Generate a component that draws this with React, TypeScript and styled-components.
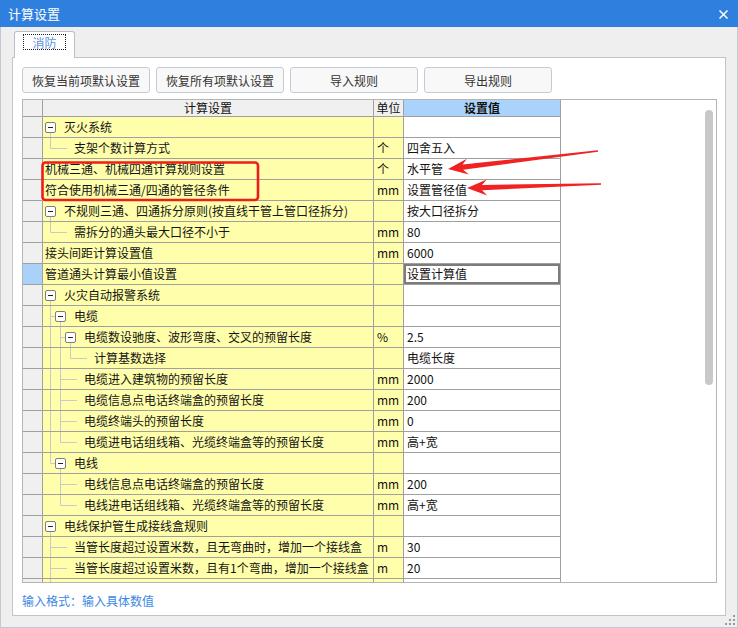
import React from 'react';
import styled, { createGlobalStyle } from 'styled-components';

/**
 * Page defaults.
 */
const GlobalStyle = createGlobalStyle`
  html, body {
    margin: 0;
    padding: 0;
    background: #efefef;
  }
  body {
    font-family: "Noto Sans CJK SC", "Noto Sans", sans-serif;
    font-size: 12px;
    color: #111;
  }
`;

/**
 * Dialog window.
 */
const Window = styled.div`
  position: relative;
  width: 738px;
  height: 628px;
  display: flex;
  flex-direction: column;
  background: #efefef;
  overflow: hidden;
`;

const TitleBar = styled.div`
  flex: none;
  height: 27px;
  background: #2e7fde;
  color: #fff;
  font-size: 13px;
  display: flex;
  align-items: center;
  justify-content: space-between;
  padding: 0 10px 0 8px;
`;

const CloseButton = styled.svg`
  width: 9px;
  height: 9px;
  margin-top: 1px;
`;

const Body = styled.div`
  flex: 1;
  display: flex;
  flex-direction: column;
  padding: 4px 11px 11px 11px;
  border: solid #c3c8d0;
  border-width: 0 1px 1px 1px;
  min-height: 0;
`;

const TabStrip = styled.div`
  flex: none;
  height: 26px;
  display: flex;
  align-items: flex-end;
  padding-left: 2px;
`;

const Tab = styled.div`
  width: 61px;
  height: 27px;
  box-sizing: border-box;
  margin-bottom: -1px;
  border: 1px solid #b9bec7;
  border-bottom: none;
  border-radius: 3px 3px 0 0;
  background: #fff;
  display: flex;
  justify-content: center;
  padding-top: 2px;
  z-index: 1;
`;

const TabLabel = styled.span`
  height: 16px;
  line-height: 15px;
  box-sizing: border-box;
  padding: 0 8px;
  border: 1px dotted #222;
  color: #5b92dc;
`;

/**
 * White page under the tab.
 */
const Panel = styled.div`
  flex: 1;
  display: flex;
  flex-direction: column;
  background: #fff;
  border: 1px solid #c4c4c4;
  padding: 9px 8px 0 9px;
`;

const ButtonRow = styled.div`
  display: flex;
  gap: 6px;
`;

const Button = styled.button`
  width: 128px;
  height: 26px;
  box-sizing: border-box;
  border: 1px solid #c5cad4;
  border-radius: 3px;
  background: #f8f8f8;
  font-family: inherit;
  font-size: 12px;
  color: #333;
  padding: 0;
`;

/**
 * Settings grid.
 */
const Grid = styled.div`
  margin-top: 6px;
  height: 484px;
  box-sizing: border-box;
  border: 1px solid #b4b4b4;
  display: flex;
  background: #fff;
`;

const TableArea = styled.div`
  flex: 1;
  overflow: hidden;
`;

const ScrollTrack = styled.div`
  flex: none;
  width: 14px;
  box-sizing: border-box;
  padding: 10px 3px 0 3px;
`;

const ScrollThumb = styled.div`
  width: 8px;
  height: 275px;
  border-radius: 4px;
  background: #c8c8c8;
`;

const Row = styled.div<{ $head?: boolean }>`
  display: grid;
  grid-template-columns: 20px 331px 30px 157px;
  height: ${(p) => (p.$head ? 17 : 21)}px;
`;

const Cell = styled.div`
  box-sizing: border-box;
  border-right: 1px solid #a0a0a0;
  border-bottom: 1px solid #a0a0a0;
  display: flex;
  align-items: center;
  overflow: hidden;
  white-space: nowrap;
  line-height: 16px;
`;

const RowHead = styled(Cell)<{ $active?: boolean }>`
  background: ${(p) => (p.$active ? '#aad1f8' : '#f0f0f0')};
`;

const HeadCell = styled(Cell)<{ $blue?: boolean }>`
  justify-content: center;
  background: ${(p) => (p.$blue ? '#aad2fa' : '#f0f0f0')};
  font-weight: ${(p) => (p.$blue ? 700 : 400)};
  color: #111;
`;

const TreeCell = styled(Cell)`
  background: #ffffab;
  padding-left: 2px;
`;

const UnitCell = styled(Cell)`
  background: #ffffab;
  padding-left: 3px;
`;

const ValueCell = styled(Cell)<{ $selected?: boolean }>`
  background: #fff;
  padding-left: 3px;
  box-shadow: ${(p) => (p.$selected ? 'inset 0 0 0 2px #7c7c7c' : 'none')};
`;

const Guides = styled.svg`
  flex: none;
  height: 20px;
`;

const Label = styled.span`
  color: #141414;
`;

const Hint = styled.div`
  margin-top: 10px;
  color: #3b88e2;
  line-height: 16px;
`;

const Overlay = styled.svg`
  position: absolute;
  left: 0;
  top: 0;
  pointer-events: none;
`;

const Grip = styled.svg`
  position: absolute;
  right: 2px;
  bottom: 2px;
`;

interface Item {
  label: string;
  unit?: string;
  value?: string;
  selected?: boolean;
  children?: Array<Item>;
}

interface FlatRow {
  item: Item;
  level: number;
  trail: Array<boolean>;
  last: boolean;
}

const tree: Array<Item> = [
  {
    label: '灭火系统',
    children: [{ label: '支架个数计算方式', unit: '个', value: '四舍五入' }],
  },
  { label: '机械三通、机械四通计算规则设置', unit: '个', value: '水平管' },
  { label: '符合使用机械三通/四通的管径条件', unit: 'mm', value: '设置管径值' },
  {
    label: '不规则三通、四通拆分原则(按直线干管上管口径拆分)',
    value: '按大口径拆分',
    children: [{ label: '需拆分的通头最大口径不小于', unit: 'mm', value: '80' }],
  },
  { label: '接头间距计算设置值', unit: 'mm', value: '6000' },
  { label: '管道通头计算最小值设置', value: '设置计算值', selected: true },
  {
    label: '火灾自动报警系统',
    children: [
      {
        label: '电缆',
        children: [
          {
            label: '电缆数设驰度、波形弯度、交叉的预留长度',
            unit: '%',
            value: '2.5',
            children: [{ label: '计算基数选择', value: '电缆长度' }],
          },
          { label: '电缆进入建筑物的预留长度', unit: 'mm', value: '2000' },
          { label: '电缆信息点电话终端盒的预留长度', unit: 'mm', value: '200' },
          { label: '电缆终端头的预留长度', unit: 'mm', value: '0' },
          { label: '电缆进电话组线箱、光缆终端盒等的预留长度', unit: 'mm', value: '高+宽' },
        ],
      },
      {
        label: '电线',
        children: [
          { label: '电线信息点电话终端盒的预留长度', unit: 'mm', value: '200' },
          { label: '电线进电话组线箱、光缆终端盒等的预留长度', unit: 'mm', value: '高+宽' },
        ],
      },
    ],
  },
  {
    label: '电线保护管生成接线盒规则',
    children: [
      { label: '当管长度超过设置米数，且无弯曲时，增加一个接线盒', unit: 'm', value: '30' },
      { label: '当管长度超过设置米数，且有1个弯曲，增加一个接线盒', unit: 'm', value: '20' },
      { label: '', unit: '', value: '' },
      { label: '', unit: '', value: '' },
    ],
  },
];

const flatten = (items: Array<Item>, level = 0, trail: Array<boolean> = []): Array<FlatRow> =>
  items.flatMap((item, i) => {
    const last = i === items.length - 1;
    const kids = item.children
      ? flatten(item.children, level + 1, level === 0 ? [] : [...trail, !last])
      : [];
    return [{ item, level, trail, last }, ...kids];
  });

const LINE = '#c9c9c9';

/**
 * Connector lines and the collapse box in front of a label.
 */
const TreeGuides: React.FC<{ row: FlatRow }> = ({ row }) => {
  const { level, trail, last, item } = row;
  const hasBox = !!item.children;
  const elbow = hasBox ? 10 : 29;
  const guideWidth = level === 0 ? 0 : (level - 1) * 10 + elbow;
  const width = guideWidth + (hasBox ? 19 : 0);
  if (width === 0) return null;
  const ex = (level - 1) * 10 + 5.5;

  return (
    <Guides width={width} viewBox={`0 0 ${width} 20`}>
      {trail.map((on, k) =>
        on ? <line key={k} x1={k * 10 + 5.5} y1={0} x2={k * 10 + 5.5} y2={20} stroke={LINE} /> : null,
      )}
      {level > 0 && (
        <>
          <line x1={ex} y1={0} x2={ex} y2={last ? 10.5 : 20} stroke={LINE} />
          <line x1={ex} y1={10.5} x2={hasBox ? guideWidth : guideWidth - 7} y2={10.5} stroke={LINE} />
        </>
      )}
      {hasBox && (
        <g transform={`translate(${guideWidth} 0)`}>
          <line x1={5.5} y1={16} x2={5.5} y2={20} stroke={LINE} />
          <rect x={0.5} y={5.5} width={10} height={10} rx={1.5} fill="#fff" stroke="#7d7d7d" />
          <line x1={3} y1={10.5} x2={8} y2={10.5} stroke="#222" />
        </g>
      )}
    </Guides>
  );
};

const arrowPoints = (x1: number, y1: number, x2: number, y2: number): string => {
  const len = Math.hypot(x2 - x1, y2 - y1);
  const ux = (x2 - x1) / len;
  const uy = (y2 - y1) / len;
  const nx = -uy;
  const ny = ux;
  const at = (d: number, w: number) => `${(x2 - ux * d + nx * w).toFixed(1)},${(y2 - uy * d + ny * w).toFixed(1)}`;
  return [
    at(len, 0.8),
    at(15, 2.6),
    at(20, 8),
    at(0, 0),
    at(20, -8),
    at(15, -2.6),
    at(len, -0.8),
  ].join(' ');
};

const buttons = ['恢复当前项默认设置', '恢复所有项默认设置', '导入规则', '导出规则'];

const App: React.FC = () => {
  const rows = flatten(tree);

  return (
    <>
      <GlobalStyle />
      <Window>
        <TitleBar>
          <span>计算设置</span>
          <CloseButton viewBox="0 0 9 9">
            <path d="M0.5 0.5 L8.5 8.5 M8.5 0.5 L0.5 8.5" stroke="#fff" strokeWidth="1.5" />
          </CloseButton>
        </TitleBar>
        <Body>
          <TabStrip>
            <Tab>
              <TabLabel>消防</TabLabel>
            </Tab>
          </TabStrip>
          <Panel>
            <ButtonRow>
              {buttons.map((b) => (
                <Button key={b}>{b}</Button>
              ))}
            </ButtonRow>
            <Grid>
              <TableArea>
                <Row $head>
                  <HeadCell />
                  <HeadCell>计算设置</HeadCell>
                  <HeadCell>单位</HeadCell>
                  <HeadCell $blue>设置值</HeadCell>
                </Row>
                {rows.map((row, i) => (
                  <Row key={i}>
                    <RowHead $active={row.item.selected} />
                    <TreeCell>
                      <TreeGuides row={row} />
                      <Label>{row.item.label}</Label>
                    </TreeCell>
                    <UnitCell>{row.item.unit}</UnitCell>
                    <ValueCell $selected={row.item.selected}>{row.item.value}</ValueCell>
                  </Row>
                ))}
              </TableArea>
              <ScrollTrack>
                <ScrollThumb />
              </ScrollTrack>
            </Grid>
            <Hint>输入格式：输入具体数值</Hint>
          </Panel>
        </Body>

        <Overlay width={738} height={628} viewBox="0 0 738 628">
          <rect x={42.5} y={162.5} width={215.5} height={37.5} rx={3} fill="none" stroke="#ee1d1d" strokeWidth={2.6} />
          <polygon points={arrowPoints(598, 151, 448, 169)} fill="#f02222" />
          <polygon points={arrowPoints(601, 184, 467, 188)} fill="#f02222" />
        </Overlay>
        <Grip width={11} height={11} viewBox="0 0 11 11">
          {[
            [8, 0],
            [4, 4],
            [8, 4],
            [0, 8],
            [4, 8],
            [8, 8],
          ].map(([x, y]) => (
            <rect key={`${x}-${y}`} x={x} y={y} width={2} height={2} fill="#9a9a9a" />
          ))}
        </Grip>
      </Window>
    </>
  );
};

export default App;
